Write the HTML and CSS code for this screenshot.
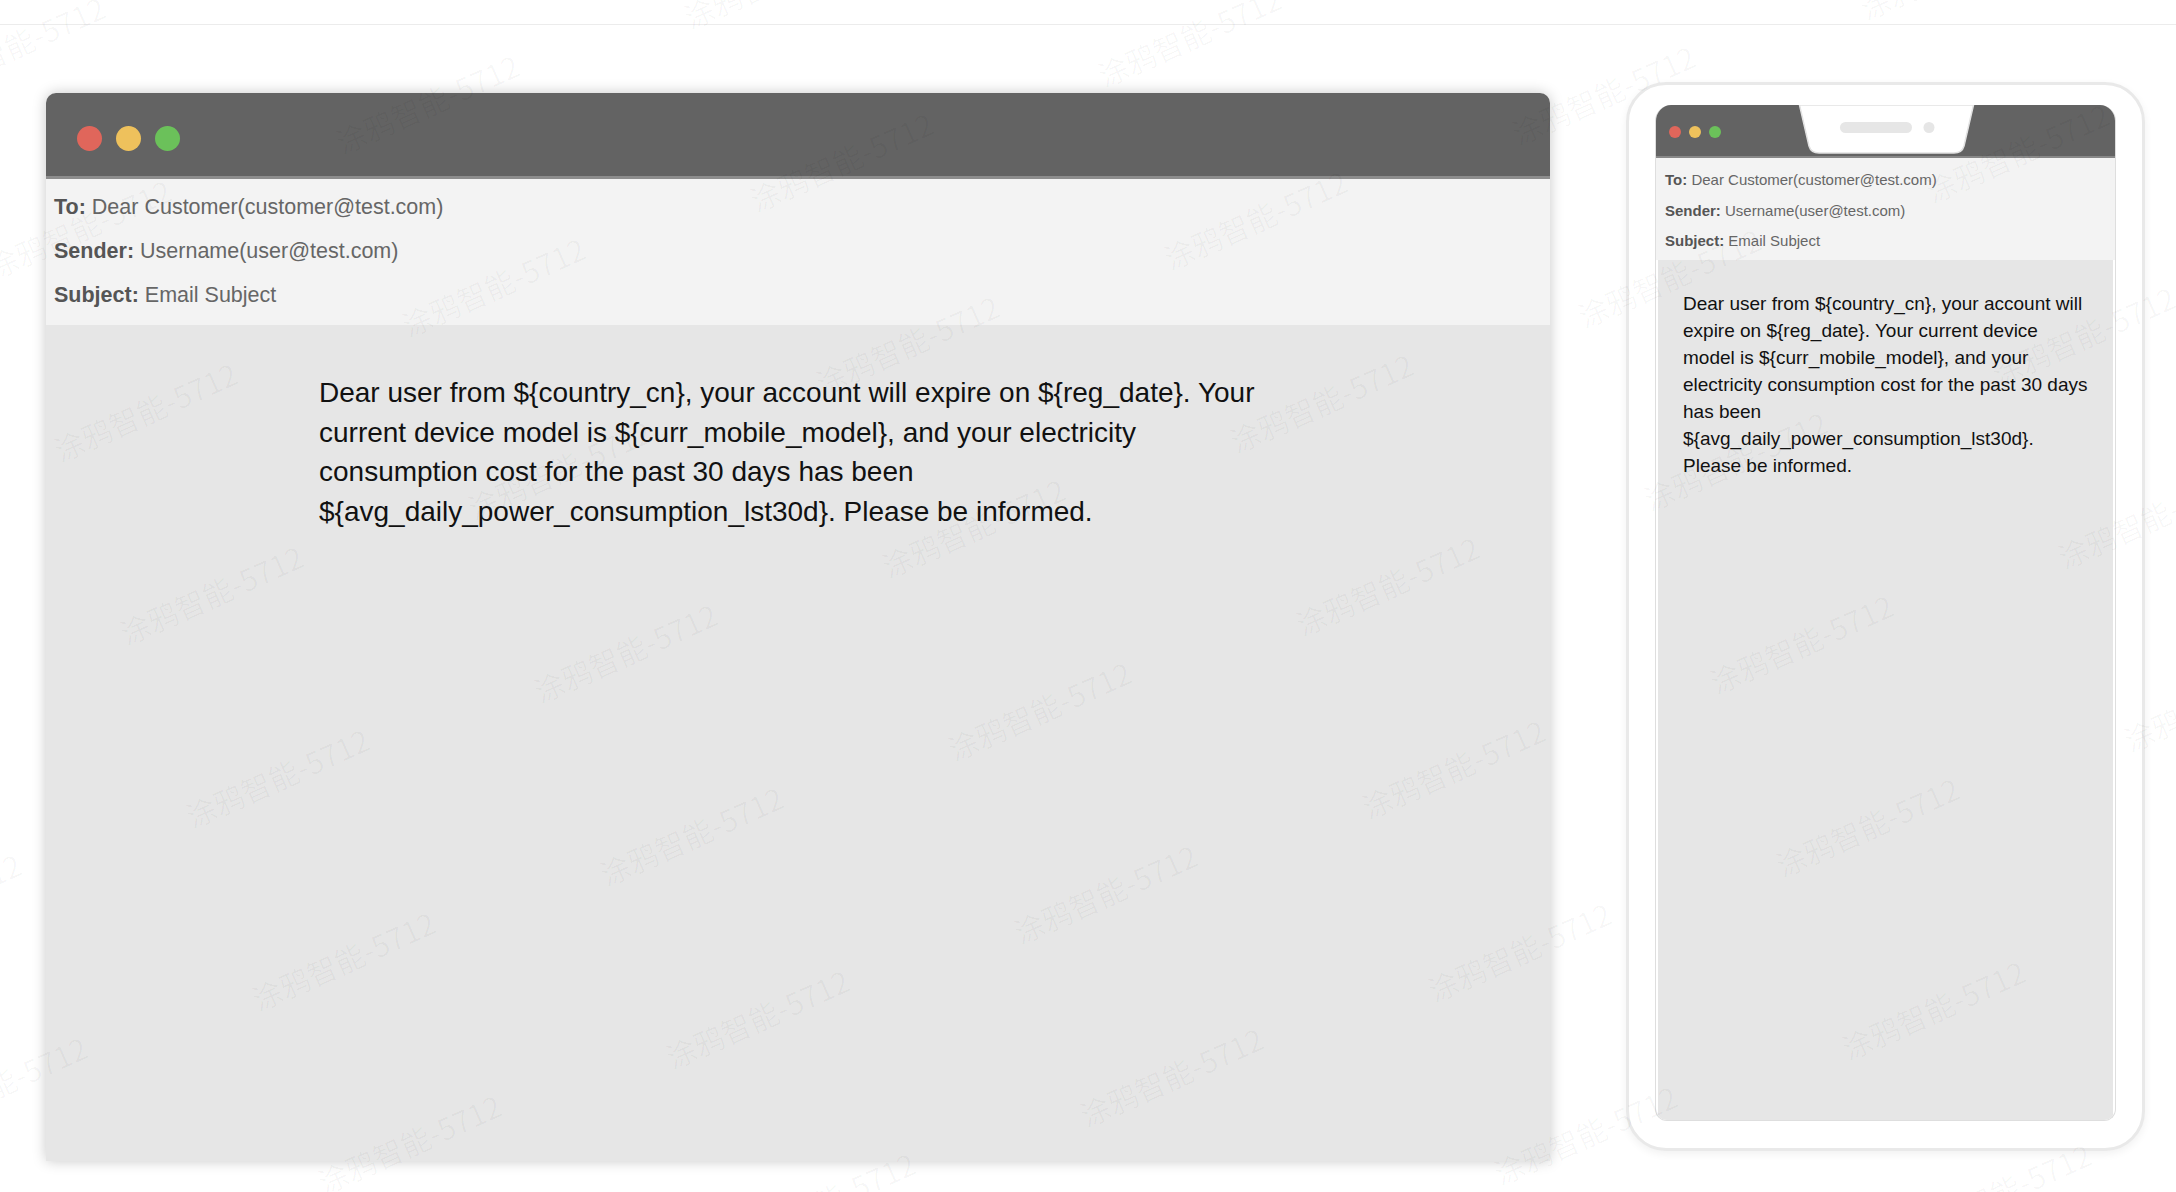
FILE: index.html
```html
<!doctype html>
<html>

<head>
    <meta charset="UTF-8">
    <title>Email preview</title>
    <link rel="stylesheet" href="styles.css">
    <script>
        document.addEventListener("DOMContentLoaded", function() {
            // tile the watermark over the whole page
            var oMark = document.getElementById('mark');
            var html = '';
            for (var i = -3; i < 9; i++) {
                for (var j = -4; j < 10; j++) {
                    var x = 427 + i * 414 + j * 66;
                    var y = 103 + i * 58 + j * 183;
                    if (x < -200 || x > 2400 || y < -120 || y > 1320) continue;
                    html += '<span style="left:' + x + 'px;top:' + y + 'px">涂鸦智能-5712</span>';
                }
            }
            oMark.innerHTML = html;
        }, false);
    </script>
</head>

<body>
    <div class="topbar"></div>

    <div class="stage">
        <!-- desktop preview -->
        <div class="desk">
            <div class="desk-head">
                <span class="dot red"></span>
                <span class="dot yellow"></span>
                <span class="dot green"></span>
            </div>
            <div class="desk-meta">
                <p><b>To:</b> Dear Customer(customer@test.com)</p>
                <p><b>Sender:</b> Username(user@test.com)</p>
                <p><b>Subject:</b> Email Subject</p>
            </div>
            <div class="desk-body">
                <p>Dear user from ${country_cn}, your account will expire on ${reg_date}. Your current device model is ${curr_mobile_model}, and your electricity consumption cost for the past 30 days has been ${avg_daily_power_consumption_lst30d}. Please be informed.</p>
            </div>
        </div>

        <!-- mobile preview -->
        <div class="phone">
            <div class="screen">
                <div class="phone-head">
                    <span class="dot red"></span>
                    <span class="dot yellow"></span>
                    <span class="dot green"></span>
                    <svg class="notch" width="177" height="50" viewBox="0 0 177 50">
                        <path d="M1.5 0 L175.5 0 L166 41 Q164 48 156 48 L21 48 Q13 48 11 41 Z" fill="#fff" stroke="#e2e2e2" stroke-width="1.5"/>
                        <rect x="42" y="17" width="72" height="11" rx="5.5" fill="#e6e6e6"/>
                        <circle cx="131" cy="22.5" r="5.5" fill="#e6e6e6"/>
                    </svg>
                </div>
                <div class="phone-meta">
                    <p><b>To:</b> Dear Customer(customer@test.com)</p>
                    <p><b>Sender:</b> Username(user@test.com)</p>
                    <p><b>Subject:</b> Email Subject</p>
                </div>
                <div class="phone-body">
                    <p>Dear user from ${country_cn}, your account will<br>expire on ${reg_date}. Your current device<br>model is ${curr_mobile_model}, and your<br>electricity consumption cost for the past 30 days<br>has been<br>${avg_daily_power_consumption_lst30d}.<br>Please be informed.</p>
                </div>
            </div>
        </div>
    </div>

    <div class="mark" id="mark"></div>
</body>

</html>
```

FILE: styles.css
```css
* {
    margin: 0;
    padding: 0;
    box-sizing: border-box;
}

html,
body {
    height: 100%;
    overflow: hidden;
    background: #fff;
    font-family: "Liberation Sans", Arial, sans-serif;
}

body {
    position: relative;
}

.topbar {
    height: 25px;
    border-bottom: 1px solid #ececec;
}

.stage {
    display: flex;
    align-items: flex-start;
    padding-left: 46px;
}

/* desktop window */
.desk {
    width: 1504px;
    height: 1068px;
    margin-top: 68px;
    border-radius: 10px 10px 0 0;
    overflow: hidden;
    display: flex;
    flex-direction: column;
    box-shadow: 0 0 14px rgba(0, 0, 0, 0.22);
}

.desk-head {
    height: 86px;
    background: #636363;
    border-bottom: 3px solid #8d8d8d;
    display: flex;
    align-items: center;
    gap: 14px;
    padding-left: 31px;
    padding-top: 8px;
}

.desk-head .dot {
    width: 25px;
    height: 25px;
}

.dot {
    border-radius: 50%;
    display: block;
}

.red {
    background: #e0665b;
}

.yellow {
    background: #eec15c;
}

.green {
    background: #6bc15a;
}

.desk-meta {
    background: #f3f3f3;
    padding: 6px 8px 8px;
    font-size: 21.5px;
    line-height: 44px;
    color: #666;
}

.desk-meta b,
.phone-meta b {
    color: #555;
}

.desk-body {
    flex: 1;
    background: #e6e6e6;
    padding-top: 48px;
}

.desk-body p {
    width: 958px;
    margin: 0 auto;
    font-size: 28px;
    line-height: 39.5px;
    color: #111;
}

/* phone frame */
.phone {
    width: 519px;
    height: 1069px;
    margin-top: 57px;
    margin-left: 76px;
    border: 3px solid #e9e9e9;
    border-radius: 40px;
    background: #fff;
    padding: 20px 26px 27px;
    box-shadow: 0 3px 8px rgba(0, 0, 0, 0.06);
}

.screen {
    height: 100%;
    border: 1px solid #dedede;
    border-top: none;
    border-radius: 16px 16px 12px 12px;
    overflow: hidden;
    display: flex;
    flex-direction: column;
}

.phone-head {
    position: relative;
    height: 53px;
    background: #636363;
    border-bottom: 2px solid #888;
    display: flex;
    align-items: center;
    gap: 8px;
    padding-left: 13px;
    padding-top: 3px;
}

.phone-head .dot {
    width: 12px;
    height: 12px;
}

.notch {
    position: absolute;
    top: 0;
    left: 50%;
    margin-left: -88px;
}

.phone-meta {
    background: #f3f3f3;
    padding: 7px 9px 3px;
    font-size: 15px;
    line-height: 30.5px;
    color: #666;
}

.phone-body {
    flex: 1;
    background: #e6e6e6;
    margin: 0 2px;
    padding: 30px 10px 0 25px;
}

.phone-body p {
    font-size: 19px;
    line-height: 27px;
    color: #111;
    white-space: nowrap;
}

/* watermark layer */
.mark {
    position: absolute;
    left: 0;
    top: 0;
    width: 100%;
    height: 100%;
    overflow: hidden;
    pointer-events: none;
}

.mark span {
    position: absolute;
    transform: translate(-50%, -50%) rotate(-24deg);
    font-family: "Noto Sans CJK SC", "Noto Sans", sans-serif;
    font-size: 30px;
    white-space: nowrap;
    color: rgba(0, 0, 0, 0.03);
}
```
